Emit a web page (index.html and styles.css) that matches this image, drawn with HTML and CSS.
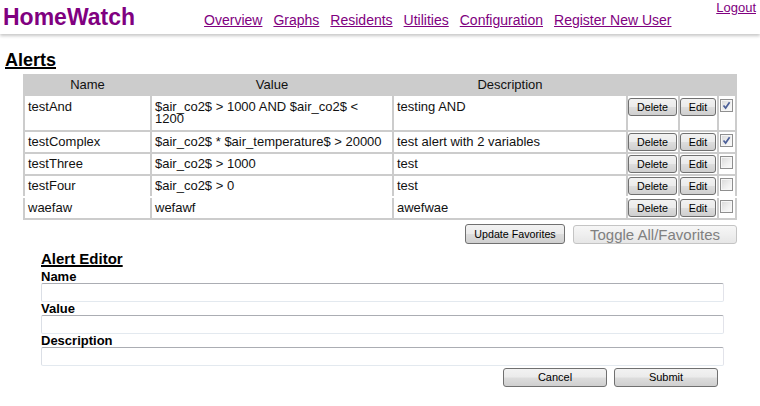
FILE: index.html
```html
<!DOCTYPE html>
<html lang="en">
<head>
<meta charset="utf-8">
<title>HomeWatch - Alerts</title>
<link rel="stylesheet" href="styles.css">
</head>
<body>
<header class="topbar">
  <div class="logo">HomeWatch</div>
  <nav class="nav">
    <a href="#">Overview</a>
    <a href="#">Graphs</a>
    <a href="#">Residents</a>
    <a href="#">Utilities</a>
    <a href="#">Configuration</a>
    <a href="#">Register New User</a>
  </nav>
  <a class="logout" href="#">Logout</a>
</header>
<main class="content">
  <h1 class="page-title">Alerts</h1>
  <table class="alerts">
    <colgroup>
      <col class="c-name"><col class="c-value"><col class="c-desc"><col class="c-del"><col class="c-edit"><col class="c-check">
    </colgroup>
    <thead>
      <tr><th>Name</th><th>Value</th><th>Description</th><th colspan="3"></th></tr>
    </thead>
    <tbody>
      <tr class="tall">
        <td>testAnd</td><td>$air_co2$ &gt; 1000 AND $air_co2$ &lt; 1200</td><td>testing AND</td>
        <td class="act"><button class="btn btn-del">Delete</button></td>
        <td class="act"><button class="btn btn-edit">Edit</button></td>
        <td class="chk"><span class="cb on"><svg viewBox="0 0 11 11" width="11" height="11"><path d="M2.5 5.5 L4.6 8 L8.6 2.2" fill="none" stroke="#4b5f98" stroke-width="1.7"/></svg></span></td>
      </tr>
      <tr>
        <td>testComplex</td><td>$air_co2$ * $air_temperature$ &gt; 20000</td><td>test alert with 2 variables</td>
        <td class="act"><button class="btn btn-del">Delete</button></td>
        <td class="act"><button class="btn btn-edit">Edit</button></td>
        <td class="chk"><span class="cb on"><svg viewBox="0 0 11 11" width="11" height="11"><path d="M2.5 5.5 L4.6 8 L8.6 2.2" fill="none" stroke="#4b5f98" stroke-width="1.7"/></svg></span></td>
      </tr>
      <tr>
        <td>testThree</td><td>$air_co2$ &gt; 1000</td><td>test</td>
        <td class="act"><button class="btn btn-del">Delete</button></td>
        <td class="act"><button class="btn btn-edit">Edit</button></td>
        <td class="chk"><span class="cb"></span></td>
      </tr>
      <tr class="joined">
        <td>testFour</td><td>$air_co2$ &gt; 0</td><td>test</td>
        <td class="act"><button class="btn btn-del">Delete</button></td>
        <td class="act"><button class="btn btn-edit">Edit</button></td>
        <td class="chk"><span class="cb"></span></td>
      </tr>
      <tr>
        <td>waefaw</td><td>wefawf</td><td>awefwae</td>
        <td class="act"><button class="btn btn-del">Delete</button></td>
        <td class="act"><button class="btn btn-edit">Edit</button></td>
        <td class="chk"><span class="cb"></span></td>
      </tr>
    </tbody>
  </table>
  <div class="fav-actions">
    <button class="btn btn-update">Update Favorites</button>
    <button class="btn btn-toggle">Toggle All/Favorites</button>
  </div>
  <section class="editor">
    <h2 class="editor-title">Alert Editor</h2>
    <label class="field-label" for="f-name">Name</label>
    <input class="field" id="f-name" type="text">
    <label class="field-label" for="f-value">Value</label>
    <input class="field" id="f-value" type="text">
    <label class="field-label" for="f-desc">Description</label>
    <input class="field" id="f-desc" type="text">
    <div class="editor-actions">
      <button class="btn btn-wide">Cancel</button>
      <button class="btn btn-wide">Submit</button>
    </div>
  </section>
</main>
</body>
</html>
```

FILE: styles.css
```css
body {
  margin: 0;
  font-family: "Liberation Sans", Arial, sans-serif;
  color: #000;
  background: #fff;
}

.topbar {
  display: flex;
  align-items: flex-start;
  height: 34px;
  padding-left: 3px;
  box-shadow: 0 2px 3px rgba(0, 0, 0, 0.22);
}

.logo {
  margin-top: 4px;
  font-size: 23px;
  line-height: 26px;
  font-weight: bold;
  color: #800080;
}

.nav {
  display: flex;
  gap: 11px;
  margin-left: 69px;
  margin-top: 12px;
  font-size: 14px;
  line-height: 16px;
}

.nav a,
.logout {
  color: #800080;
  text-decoration: underline;
}

.logout {
  margin-left: auto;
  margin-right: 4px;
  font-size: 13px;
  line-height: 15px;
}

.content {
  padding: 16px 0 0 5px;
}

.page-title {
  margin: 0;
  font-size: 18px;
  line-height: 21px;
  font-weight: bold;
  text-decoration: underline;
  text-decoration-thickness: 2px;
}

.alerts {
  margin: 3px 0 0 18px;
  width: 714px;
  table-layout: fixed;
  border-collapse: collapse;
  font-size: 13px;
  line-height: 12px;
  color: #111;
}

.c-name { width: 127px; }
.c-value { width: 242px; }
.c-desc { width: 234px; }
.c-del { width: 52px; }
.c-edit { width: 39px; }
.c-check { width: 18px; }

.alerts th {
  background: #ccc;
  border: 2px solid #ccc;
  font-weight: normal;
  text-align: center;
  padding: 3px 0 3px;
  line-height: 12px;
}

.alerts td {
  border: 2px solid #ccc;
  padding: 4px 3px 4px 3px;
  vertical-align: top;
  text-align: left;
  background: #fff;
}

.alerts tr.tall td {
  padding-top: 5px;
  padding-bottom: 5px;
}

.alerts tr.joined td {
  border-bottom-color: #fff;
}

.alerts td.act {
  padding: 1px 0 1px 0;
}

.alerts tr.tall td.act {
  padding-top: 2px;
}

.alerts td.chk {
  padding: 2px 0 0 1px;
}

.alerts tr.tall td.chk {
  padding-top: 3px;
}

.btn {
  box-sizing: border-box;
  height: 18px;
  padding: 0;
  font-family: "Liberation Sans", Arial, sans-serif;
  font-size: 10.7px;
  line-height: 16px;
  color: #000;
  border: 1px solid #707070;
  border-radius: 3px;
  background: linear-gradient(#f2f2f2 0%, #ebebeb 48%, #dddddd 52%, #cfcfcf 100%);
}

.btn-del { width: 49px; display: block; }
.btn-edit { width: 36px; display: block; }

.cb {
  display: block;
  box-sizing: border-box;
  width: 13px;
  height: 13px;
  border: 1px solid #8f8f8f;
  background: linear-gradient(135deg, #d8d8d8 0%, #f0f0f0 60%, #fbfbfb 100%);
  box-shadow: inset 0 0 0 1px #f6f6f6;
}

.cb svg {
  display: block;
}

.fav-actions {
  display: flex;
  justify-content: flex-end;
  align-items: flex-start;
  gap: 8px;
  width: 714px;
  margin: 4px 0 0 18px;
}

.btn-update {
  width: 100px;
  height: 20px;
  line-height: 18px;
}

.btn-toggle {
  width: 164px;
  height: 19px;
  margin-top: 1px;
  font-size: 15px;
  line-height: 17px;
  color: #808080;
  border-color: #c4c4c4;
  background: linear-gradient(#f6f6f6 0%, #efefef 50%, #e6e6e6 100%);
}

.editor {
  margin: 6px 0 0 36px;
  width: 683px;
}

.editor-title {
  margin: 0 0 3px;
  font-size: 15px;
  line-height: 17px;
  font-weight: bold;
  text-decoration: underline;
  text-decoration-thickness: 2px;
}

.field-label {
  display: block;
  font-size: 13px;
  line-height: 13px;
  font-weight: bold;
}

.field {
  display: block;
  box-sizing: border-box;
  width: 683px;
  height: 19px;
  margin: 0;
  padding: 0 2px;
  border: 1px solid;
  border-color: #abadb3 #e2e3ea #e3e9ef #dbdfe6;
  border-radius: 2px;
  font-family: "Liberation Sans", Arial, sans-serif;
  font-size: 13px;
}

.editor-actions {
  display: flex;
  justify-content: flex-end;
  gap: 7px;
  margin-top: 2px;
  padding-right: 6px;
}

.btn-wide {
  width: 104px;
  height: 19px;
  font-size: 11px;
  line-height: 17px;
}
```
